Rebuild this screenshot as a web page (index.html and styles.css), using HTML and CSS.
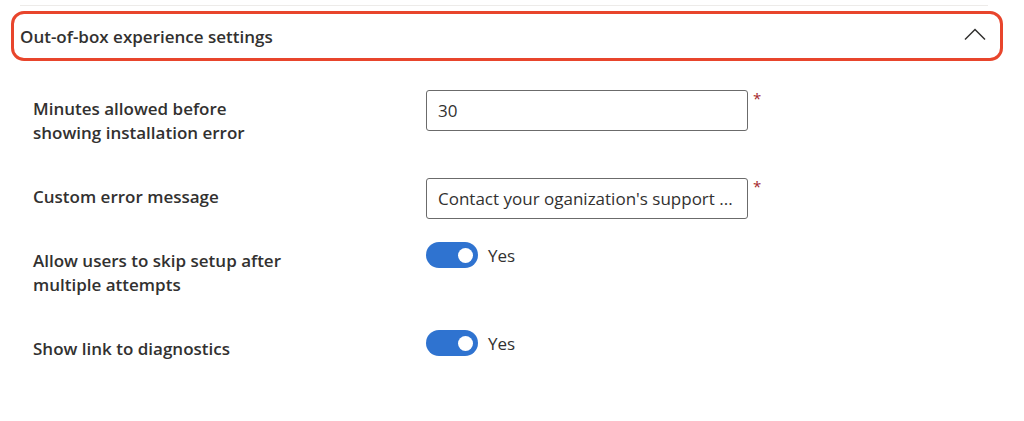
FILE: index.html
```html
<!DOCTYPE html>
<html>
<head>
<meta charset="utf-8">
<link rel="stylesheet" href="styles.css">
</head>
<body>
<div class="page">
  <div class="divider"></div>
  <div class="section-header">
    <span class="section-title">Out-of-box experience settings</span>
    <svg class="chevron" width="22" height="13" viewBox="0 0 22 13"><path d="M1 11.5 L11 1.5 L21 11.5" fill="none" stroke="#323130" stroke-width="1.5"/></svg>
  </div>
  <div class="settings">
    <div class="row">
      <div class="label">Minutes allowed before<br>showing installation error</div>
      <div class="control">
        <div class="input">30</div>
        <span class="req">*</span>
      </div>
    </div>
    <div class="row">
      <div class="label">Custom error message</div>
      <div class="control">
        <div class="input">Contact your oganization's support ...</div>
        <span class="req">*</span>
      </div>
    </div>
    <div class="row">
      <div class="label">Allow users to skip setup after<br>multiple attempts</div>
      <div class="control toggle-control">
        <span class="toggle"><span class="knob"></span></span>
        <span class="toggle-text">Yes</span>
      </div>
    </div>
    <div class="row">
      <div class="label">Show link to diagnostics</div>
      <div class="control toggle-control">
        <span class="toggle"><span class="knob"></span></span>
        <span class="toggle-text">Yes</span>
      </div>
    </div>
  </div>
</div>
</body>
</html>
```
FILE: styles.css
```css
html, body {
  margin: 0;
  padding: 0;
  background: #ffffff;
}
body {
  font-family: "Open Sans", "Noto Sans", sans-serif;
  color: #323130;
  width: 1024px;
  height: 421px;
  overflow: hidden;
}
.page {
  padding-top: 5px;
}
.divider {
  margin-left: 20px;
  width: 968px;
  border-top: 1px solid #edebe9;
}
.section-header {
  box-sizing: border-box;
  margin-top: 5px;
  margin-left: 11px;
  width: 992px;
  height: 50px;
  border: 3px solid #e8452c;
  border-radius: 13px;
  display: flex;
  align-items: center;
  justify-content: space-between;
  padding: 0 14px 0 6px;
}
.section-title {
  font-size: 17px;
  font-weight: 600;
  color: #323130;
}
.chevron {
  display: block;
  margin-top: -3px;
}
.settings {
  margin-top: 29px;
  padding-left: 33px;
}
.row {
  display: flex;
  align-items: flex-start;
}
.label {
  width: 393px;
  font-size: 17px;
  font-weight: 600;
  line-height: 24px;
  padding-top: 7px;
  padding-bottom: 33px;
}
.control {
  display: flex;
  align-items: flex-start;
}
.input {
  box-sizing: border-box;
  width: 322px;
  height: 41px;
  border: 1.5px solid #6b6b6b;
  border-radius: 3px;
  padding: 0 11px;
  display: flex;
  align-items: center;
  font-size: 17px;
  color: #323130;
  white-space: nowrap;
  overflow: hidden;
}
.req {
  color: #a4262c;
  font-size: 15px;
  line-height: 15px;
  margin-left: 5px;
  margin-top: 1px;
}
.toggle-control {
  align-items: center;
  height: 26px;
}
.toggle {
  box-sizing: border-box;
  width: 52px;
  height: 26px;
  border-radius: 13px;
  background: #2f73d0;
  display: flex;
  align-items: center;
  justify-content: flex-end;
  padding-right: 5px;
}
.knob {
  width: 15px;
  height: 15px;
  border-radius: 50%;
  background: #ffffff;
}
.toggle-text {
  margin-left: 10px;
  font-size: 17px;
  color: #323130;
}
```
